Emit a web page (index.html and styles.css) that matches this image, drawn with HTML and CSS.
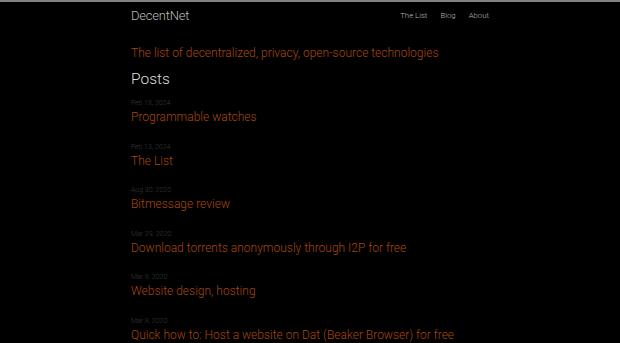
FILE: index.html
```html
<!DOCTYPE html>
<html lang="en">
<head>
    <meta charset="UTF-8">
    <title>DecentNet</title>
    <link rel="stylesheet" href="styles.css">
</head>
<body>
    <!-- Site header -->
    <header class="site-header">
        <div class="wrapper header-inner">
            <a class="site-title" href="#">DecentNet</a>
            <nav class="site-nav">
                <a href="#">The List</a>
                <a href="#">Blog</a>
                <a href="#">About</a>
            </nav>
        </div>
    </header>

    <!-- Main content -->
    <main class="wrapper">
        <p class="tagline">The list of decentralized, privacy, open-source technologies</p>
        <h2 class="post-list-heading">Posts</h2>
        <ul class="post-list">
            <li>
                <span class="post-meta">Feb 18, 2024</span>
                <a class="post-link" href="#">Programmable watches</a>
            </li>
            <li>
                <span class="post-meta">Feb 13, 2024</span>
                <a class="post-link" href="#">The List</a>
            </li>
            <li>
                <span class="post-meta">Aug 30, 2020</span>
                <a class="post-link" href="#">Bitmessage review</a>
            </li>
            <li>
                <span class="post-meta">Mar 29, 2020</span>
                <a class="post-link" href="#">Download torrents anonymously through I2P for free</a>
            </li>
            <li>
                <span class="post-meta">Mar 8, 2020</span>
                <a class="post-link" href="#">Website design, hosting</a>
            </li>
            <li>
                <span class="post-meta">Mar 8, 2020</span>
                <a class="post-link" href="#">Quick how to: Host a website on Dat (Beaker Browser) for free</a>
            </li>
        </ul>
    </main>
</body>
</html>
```

FILE: styles.css
```css
/* Reset */
* {
    box-sizing: border-box;
    margin: 0;
    padding: 0;
}

body {
    background-color: #000;
    color: #ddd;
    font-family: Roboto, "Liberation Sans", sans-serif;
    font-weight: 300;
    border-top: 2px solid #828282;
}

a {
    text-decoration: none;
}

.wrapper {
    width: 358px;
    margin: 0 auto;
}

/* Header */
.header-inner {
    display: flex;
    justify-content: space-between;
    align-items: center;
    height: 26px;
}

.site-title {
    color: #bbb;
    font-size: 13px;
    letter-spacing: -0.2px;
}

.site-nav {
    display: flex;
    gap: 13px;
}

.site-nav a {
    color: #bbb;
    font-size: 7.8px;
}

/* Content */
.tagline {
    color: #a8460f;
    font-size: 12px;
    margin-top: 18px;
}

.post-list-heading {
    color: #ddd;
    font-size: 15.5px;
    font-weight: 300;
    margin-top: 10px;
}

.post-list {
    list-style: none;
    margin-top: 11px;
}

.post-list li {
    display: flex;
    flex-direction: column;
    margin-bottom: 15.6px;
}

.post-meta {
    color: #3a3a3a;
    font-size: 7px;
    line-height: 9px;
}

.post-link {
    color: #a8460f;
    font-size: 12px;
    line-height: 19px;
}
```
